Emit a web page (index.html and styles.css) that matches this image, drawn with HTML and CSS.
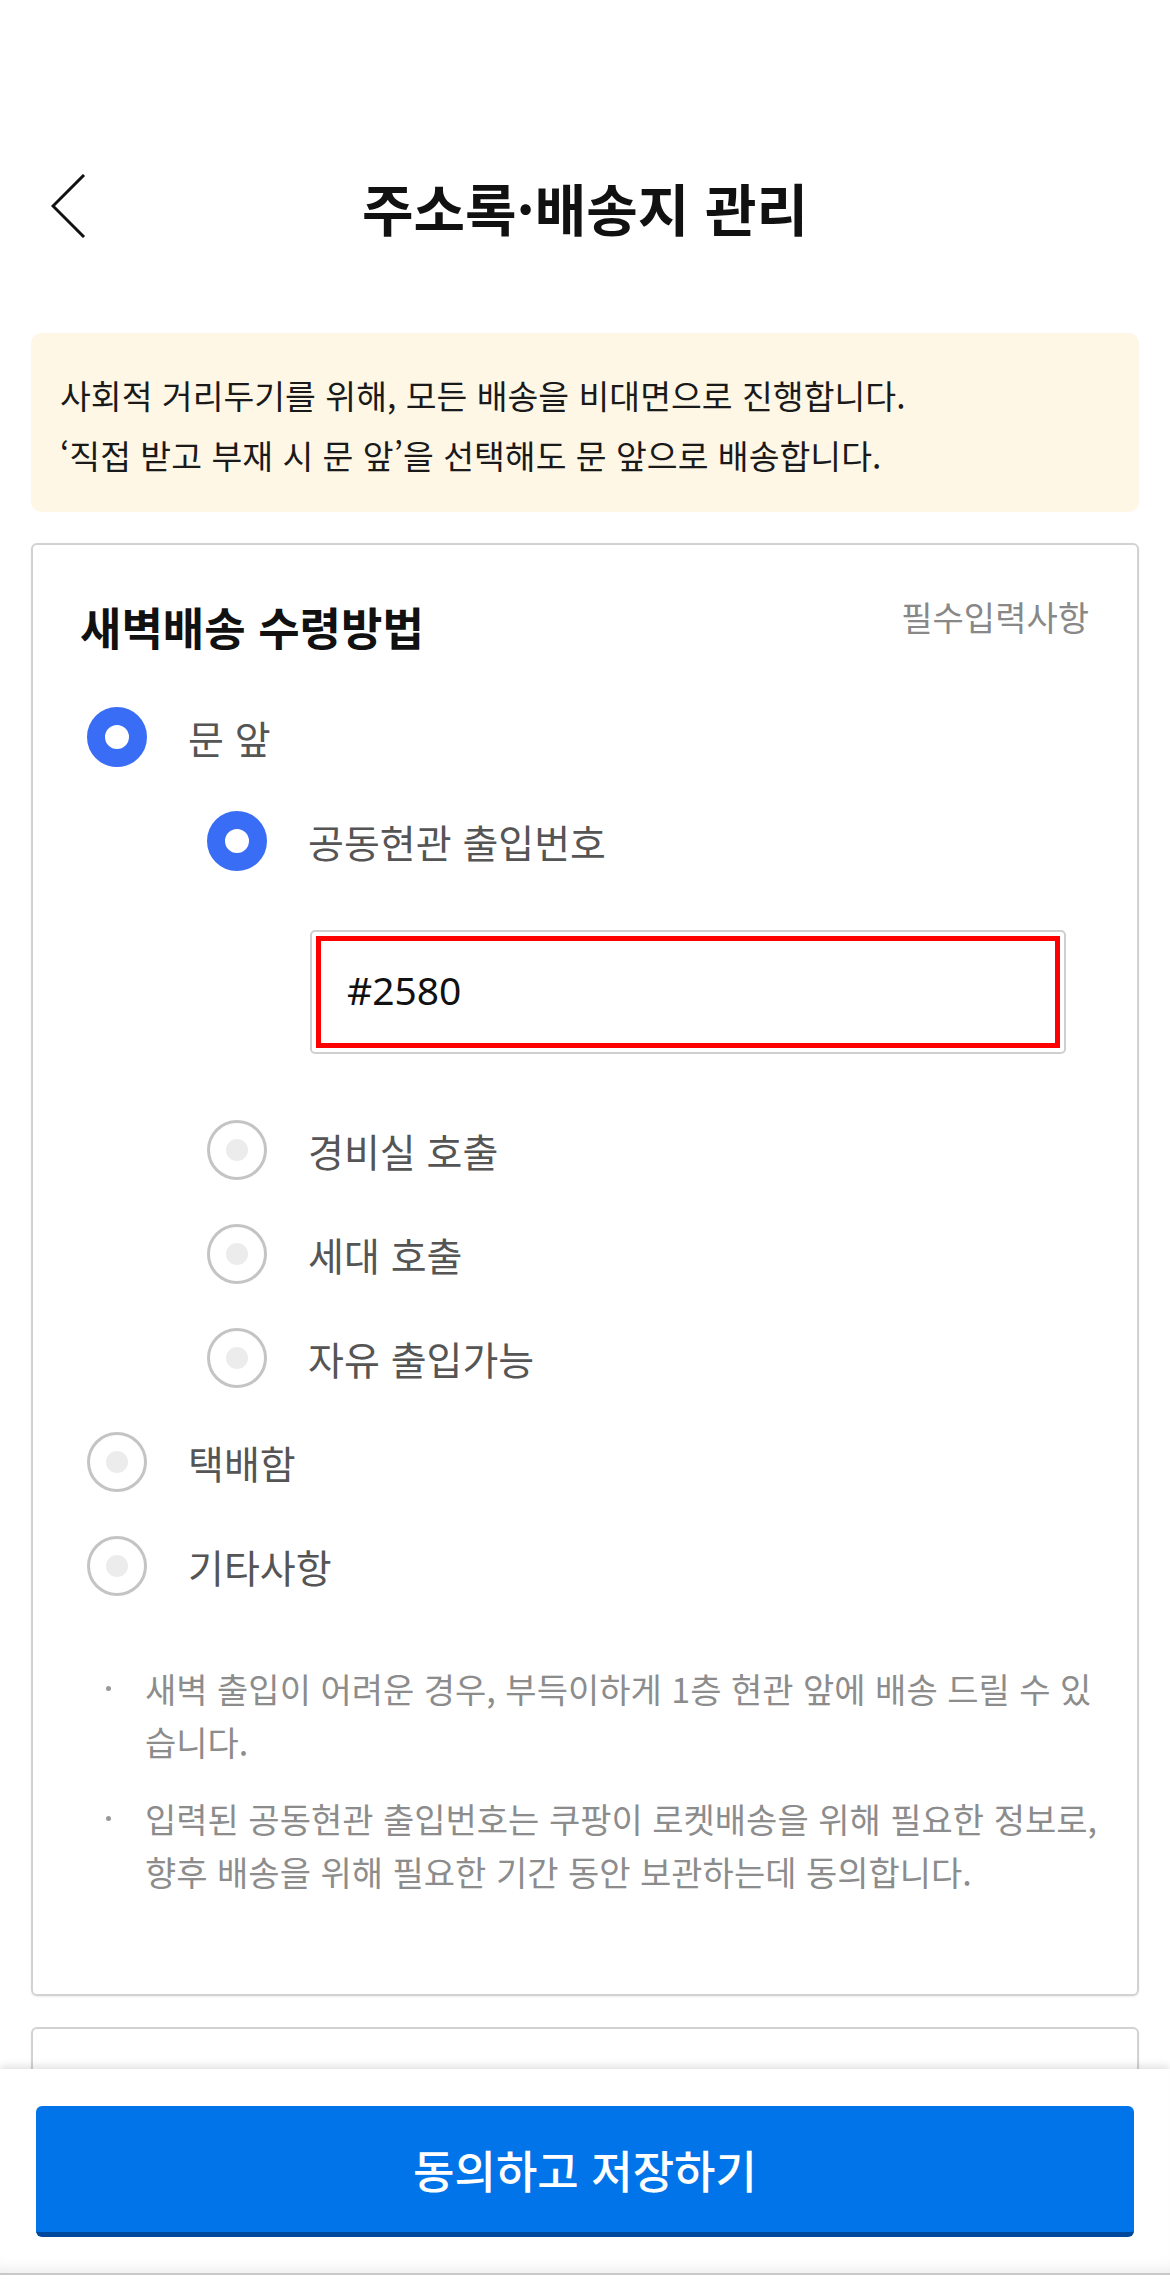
FILE: index.html
```html
<!DOCTYPE html>
<html lang="ko">
<head>
  <meta charset="utf-8">
  <title>주소록·배송지 관리</title>
  <link rel="stylesheet" href="styles.css">
</head>
<body>
  <header class="header">
    <a class="back" href="#" aria-label="뒤로">
      <svg width="36" height="64" viewBox="0 0 36 64">
        <polyline points="33,1 2,32 33,63" fill="none" stroke="#111" stroke-width="3"/>
      </svg>
    </a>
    <h1 class="title">주소록·배송지 관리</h1>
    <span></span>
  </header>

  <div class="notice">
    <p>사회적 거리두기를 위해, 모든 배송을 비대면으로 진행합니다.</p>
    <p>‘직접 받고 부재 시 문 앞’을 선택해도 문 앞으로 배송합니다.</p>
  </div>

  <section class="card">
    <div class="card-head">
      <h2>새벽배송 수령방법</h2>
      <span class="required">필수입력사항</span>
    </div>

    <div class="options">
      <label class="option">
        <span class="radio checked"></span>
        <span class="option-label">문 앞</span>
      </label>

      <div class="sub-options">
        <label class="option">
          <span class="radio checked"></span>
          <span class="option-label">공동현관 출입번호</span>
        </label>
        <div class="code-field">
          <div class="code-mark">#2580</div>
        </div>
        <label class="option">
          <span class="radio"></span>
          <span class="option-label">경비실 호출</span>
        </label>
        <label class="option">
          <span class="radio"></span>
          <span class="option-label">세대 호출</span>
        </label>
        <label class="option">
          <span class="radio"></span>
          <span class="option-label">자유 출입가능</span>
        </label>
      </div>

      <label class="option">
        <span class="radio"></span>
        <span class="option-label">택배함</span>
      </label>
      <label class="option">
        <span class="radio"></span>
        <span class="option-label">기타사항</span>
      </label>
    </div>

    <ul class="notes">
      <li>새벽 출입이 어려운 경우, 부득이하게 1층 현관 앞에 배송 드릴 수 있습니다.</li>
      <li>입력된 공동현관 출입번호는 쿠팡이 로켓배송을 위해 필요한 정보로, 향후 배송을 위해 필요한 기간 동안 보관하는데 동의합니다.</li>
    </ul>
  </section>

  <section class="card card-next"></section>

  <footer class="footer">
    <div class="footer-bar">
      <button class="save-btn">동의하고 저장하기</button>
    </div>
  </footer>
</body>
</html>
```

FILE: styles.css
```css
body {
  margin: 0;
  background-color: #fff;
  color: #111;
  font-family: "Noto Sans CJK KR", "Noto Sans", sans-serif;
}

/* header */
.header {
  display: grid;
  grid-template-columns: 1fr auto 1fr;
  align-items: center;
  height: 172px;
  padding-top: 120px;
}
.back {
  display: block;
  width: 36px;
  height: 64px;
  margin-left: 51px;
}
.back svg {
  display: block;
}
.title {
  margin: 0;
  font-size: 56px;
  font-weight: 700;
  color: #111;
}

/* notice */
.notice {
  margin: 41px 31px 0;
  padding: 32px 29px 27px;
  background-color: #fff7e6;
  border-radius: 10px;
  font-size: 33.5px;
  line-height: 60px;
  color: #1a1a1a;
}
.notice p {
  margin: 0;
}

/* card */
.card {
  margin: 31px 31px 0;
  padding: 52px 0 96px;
  border: 2px solid #d2d2d2;
  border-radius: 6px;
  box-shadow: 0 1px 2px rgba(0,0,0,0.08);
}
.card-head {
  display: flex;
  justify-content: space-between;
  align-items: flex-start;
  padding: 0 48px 0 47px;
  margin-bottom: 28px;
}
.card-head h2 {
  margin: 0;
  font-size: 45px;
  line-height: 60px;
  font-weight: 700;
  color: #111;
}
.required {
  font-size: 34px;
  line-height: 40px;
  color: #888;
}

.options {
  padding-left: 54px;
}
.sub-options {
  padding-left: 120px;
}
.option {
  display: flex;
  align-items: center;
  gap: 41px;
  height: 104px;
}
.option-label {
  font-size: 39px;
  color: #555;
}
.radio {
  flex: none;
  display: flex;
  align-items: center;
  justify-content: center;
  box-sizing: border-box;
  width: 60px;
  height: 60px;
  border: 3px solid #c4c4c4;
  border-radius: 50%;
  background-color: #fff;
}
.radio::after {
  content: "";
  width: 22px;
  height: 22px;
  border-radius: 50%;
  background-color: #ececec;
}
.radio.checked {
  border: 18px solid #3a6df6;
}
.radio.checked::after {
  display: none;
}

.code-field {
  margin: 37px 71px 44px 103px;
  padding: 4px;
  border: 2px solid #cfcfcf;
  border-radius: 5px;
}
.code-mark {
  height: 102px;
  padding-left: 26px;
  border: 5px solid #ff0000;
  font-family: "Noto Sans", sans-serif;
  font-size: 39px;
  line-height: 98px;
  color: #111;
}

.notes {
  list-style: none;
  margin: 44px 0 0;
  padding: 0 35px 0 73px;
  font-size: 34px;
  line-height: 53px;
  color: #8c8c8c;
}
.notes li {
  display: flex;
}
.notes li + li {
  margin-top: 24px;
}
.notes li::before {
  content: "";
  flex: none;
  width: 5px;
  height: 5px;
  margin: 24px 34px 0 0;
  border-radius: 50%;
  background-color: #999;
}

.card-next {
  height: 200px;
  padding: 0;
  margin-top: 31px;
}

/* bottom bar */
.footer {
  position: fixed;
  left: 0;
  right: 0;
  bottom: 0;
  height: 220px;
  background-color: #fff;
  box-shadow: 0 -3px 8px rgba(0,0,0,0.12);
}
.footer-bar {
  box-sizing: border-box;
  height: 206px;
  padding: 37px 36px 0;
  border-bottom: 2px solid #c8c8c8;
  box-shadow: inset 0 -14px 14px -10px rgba(0,0,0,0.08);
}
.save-btn {
  display: block;
  width: 100%;
  height: 131px;
  padding: 0;
  border: none;
  border-bottom: 5px solid #00489c;
  border-radius: 6px;
  background-color: #0074e8;
  color: #fff;
  font-family: "Noto Sans CJK KR", "Noto Sans", sans-serif;
  font-size: 45px;
  font-weight: 500;
  cursor: pointer;
}
```
